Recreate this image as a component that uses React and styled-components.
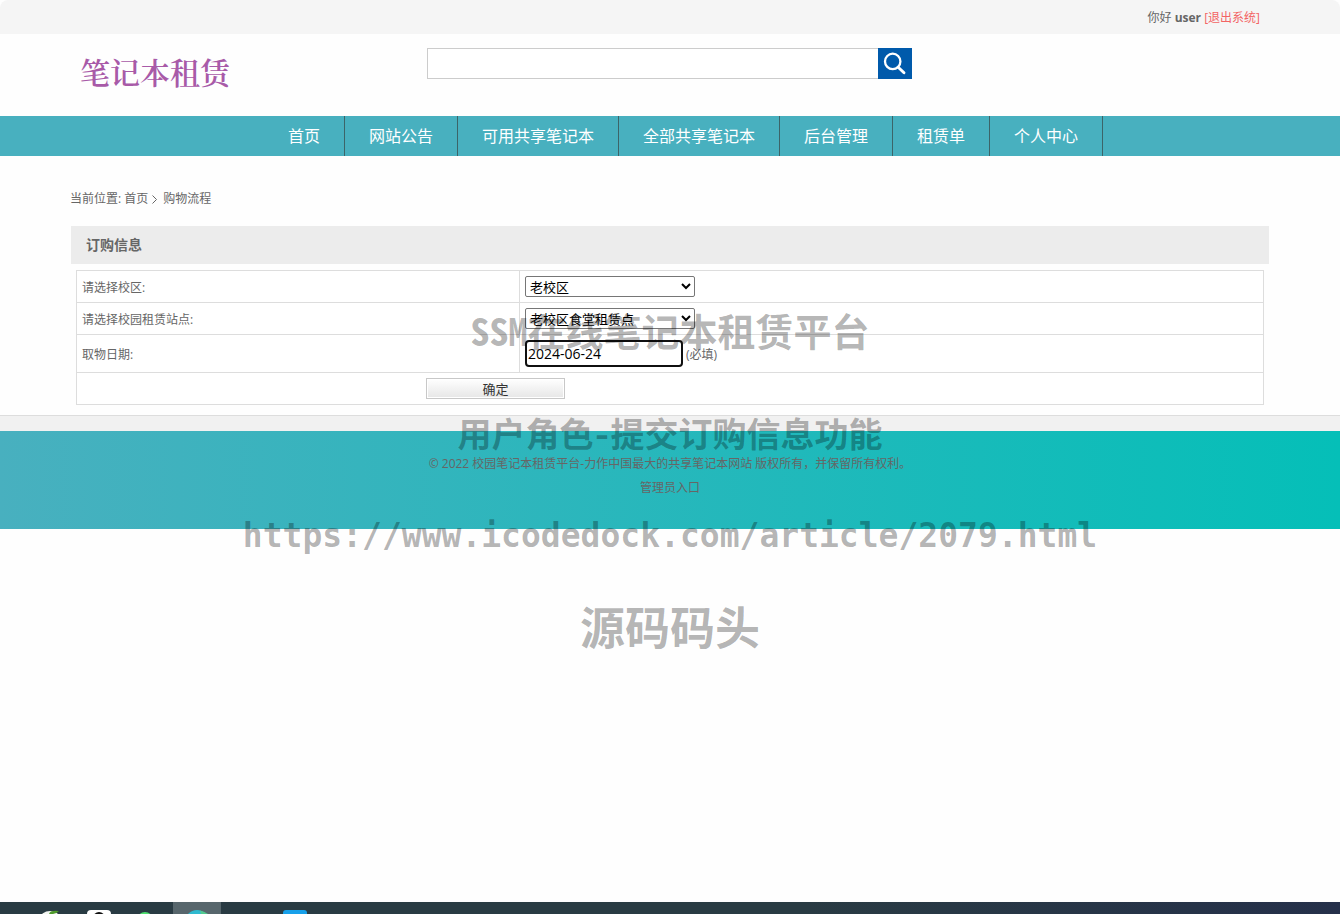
import React, { useState } from "react";
import styled, { createGlobalStyle } from "styled-components";

const MENU = [
  "首页",
  "网站公告",
  "可用共享笔记本",
  "全部共享笔记本",
  "后台管理",
  "租赁单",
  "个人中心",
];

const MARKS = [
  { text: "SSM在线笔记本租赁平台", size: 38, height: 104 },
  { text: "用户角色-提交订购信息功能", size: 34, height: 102 },
  { text: "https://www.icodedock.com/article/2079.html", size: 33, height: 104, latin: true },
  { text: "源码码头", size: 45, height: 76 },
];

const SearchIcon = () => (
  <svg width="34" height="31" viewBox="0 0 34 31" fill="none" stroke="#fff">
    <circle cx="14.7" cy="13.4" r="7.7" strokeWidth="2.3" />
    <path d="M20.2 19.2 L26 24.8" strokeWidth="2.9" strokeLinecap="round" />
  </svg>
);

const TaskIcons = () => (
  <svg width="340" height="12" viewBox="0 0 340 12">
    <ellipse cx="50" cy="17" rx="10" ry="8" fill="#f4f6f2" />
    <path d="M49 12 Q50 8 59 9 Q56 12 53 12 Z" fill="#4f9a2c" />
    <rect x="87" y="8" width="24" height="20" rx="4" fill="#fff" />
    <circle cx="99" cy="16" r="6" fill="#111" />
    <circle cx="145" cy="18" r="8" fill="#4fe070" />
    <rect x="173" y="0" width="48" height="12" fill="#57666c" />
    <circle cx="197" cy="20" r="12" fill="#2fb9cf" />
    <path d="M200 8.4 Q205 9.4 208 12 H201 Z" fill="#52c98e" />
    <rect x="283" y="8" width="24" height="20" rx="3" fill="#17a0ea" />
  </svg>
);

export default () => {
  const [keyword, setKeyword] = useState("");
  const [date, setDate] = useState("2024-06-24");

  return (
    <Page>
      <GlobalStyle />
      <TopBar>
        <Greeting>
          你好 <b>user</b> <Logout href="#">[退出系统]</Logout>
        </Greeting>
      </TopBar>

      <Header>
        <Logo href="#">笔记本租赁</Logo>
        <Search onSubmit={(e) => e.preventDefault()}>
          <SearchInput
            type="text"
            aria-label="搜索"
            value={keyword}
            onChange={(e) => setKeyword(e.target.value)}
          />
          <SearchButton type="submit" aria-label="搜索">
            <SearchIcon />
          </SearchButton>
        </Search>
      </Header>

      <Nav>
        <Menu>
          {MENU.map((name) => (
            <MenuLink href="#" key={name}>{name}</MenuLink>
          ))}
        </Menu>
      </Nav>

      <Main>
        <Crumbs>
          当前位置: <a href="#">首页</a>
          <Arrow width="5" height="9" viewBox="0 0 5 9">
            <path d="M0.5 0.5 L4.5 4.5 L0.5 8.5" fill="none" stroke="#666" />
          </Arrow>
          购物流程
        </Crumbs>
        <Title>订购信息</Title>
        <Form onSubmit={(e) => e.preventDefault()}>
          <Table>
            <tbody>
              <Row>
                <LabelCell><label htmlFor="campus">请选择校区:</label></LabelCell>
                <Cell>
                  <Select id="campus">
                    <option>老校区</option>
                  </Select>
                </Cell>
              </Row>
              <Row>
                <LabelCell><label htmlFor="site">请选择校园租赁站点:</label></LabelCell>
                <Cell>
                  <Select id="site">
                    <option>老校区食堂租赁点</option>
                  </Select>
                </Cell>
              </Row>
              <Row $tall>
                <LabelCell><label htmlFor="date">取物日期:</label></LabelCell>
                <Cell>
                  <DateField>
                    <DateInput
                      id="date"
                      type="text"
                      value={date}
                      onChange={(e) => setDate(e.target.value)}
                    />
                    (必填)
                  </DateField>
                </Cell>
              </Row>
              <Row>
                <SubmitCell colSpan={2}>
                  <Submit type="submit">确定</Submit>
                </SubmitCell>
              </Row>
            </tbody>
          </Table>
        </Form>
      </Main>

      <Divider />
      <Footer>
        <p>© 2022 校园笔记本租赁平台-力作中国最大的共享笔记本网站 版权所有，并保留所有权利。</p>
        <p><a href="#">管理员入口</a></p>
      </Footer>

      <Taskbar>
        <TaskIcons />
      </Taskbar>

      <Watermark>
        {MARKS.map((m) => (
          <Mark key={m.text} $size={m.size} $height={m.height} $latin={m.latin}>
            {m.text}
          </Mark>
        ))}
      </Watermark>
    </Page>
  );
};

const GlobalStyle = createGlobalStyle`
  * {
    box-sizing: border-box;
  }
  body {
    margin: 0;
    background: #fefefe;
    color: #666;
    font: 12px/24px "Open Sans", "Noto Sans CJK SC", sans-serif;
  }
  p {
    margin: 0;
  }
  a {
    color: inherit;
    text-decoration: none;
  }
`;

const Page = styled.div`
  position: relative;
  display: flex;
  flex-direction: column;
  min-height: 100vh;
  overflow: hidden;
`;

const TopBar = styled.div`
  height: 34px;
  background: #f5f5f5;
  border-radius: 8px 8px 0 0;
`;

const Greeting = styled.div`
  max-width: 1200px;
  margin: 0 auto;
  padding: 0 10px;
  line-height: 36px;
  text-align: right;
`;

const Logout = styled.a`
  color: #f36464;
`;

const Header = styled.header`
  display: grid;
  grid-template-columns: 1fr 485px 1fr;
  width: 100%;
  max-width: 1200px;
  height: 82px;
  margin: 0 auto;
  padding: 14px 11px 0 10px;
`;

const Logo = styled.a`
  color: #a85aa8;
  font: 600 30px/46px "Noto Serif CJK SC", "Noto Sans CJK SC", serif;
`;

const Search = styled.form`
  display: flex;
  height: 31px;
`;

const SearchInput = styled.input`
  flex: 1;
  min-width: 0;
  padding: 0 8px;
  border: 1px solid #ccc;
  border-right: 0;
  outline: none;
  background: #fff;
`;

const SearchButton = styled.button`
  display: flex;
  width: 34px;
  padding: 0;
  border: 0;
  background: #005aab;
  cursor: pointer;
`;

const Nav = styled.nav`
  background: #48b0bf;
`;

const Menu = styled.div`
  display: flex;
  max-width: 1200px;
  margin: 0 auto;
  padding-left: 194px;
`;

const MenuLink = styled.a`
  padding: 0 24px;
  border-right: 1px solid #3c6468;
  color: #fff;
  font-size: 16px;
  line-height: 40px;
`;

const Main = styled.main`
  width: 100%;
  max-width: 1200px;
  margin: 0 auto;
  padding: 31px 0 10px;
`;

const Crumbs = styled.div`
  display: flex;
  align-items: center;
  white-space: pre;
`;

const Arrow = styled.svg`
  margin: 0 6px 0 4px;
`;

const Title = styled.h2`
  margin: 15px 1px 0;
  padding-left: 15px;
  background: #ececec;
  font-size: 14px;
  line-height: 38px;
`;

const Form = styled.form`
  padding: 6px 6px 0;
`;

const Table = styled.table`
  width: 100%;
  border-collapse: collapse;
  table-layout: fixed;
  background: #fff;
`;

const Row = styled.tr`
  height: ${(p) => (p.$tall ? 38 : 32)}px;
`;

const Cell = styled.td`
  padding: 0 5px;
  border: 1px solid #ddd;
  line-height: 20px;
`;

const LabelCell = styled(Cell)`
  width: 443px;
  padding-top: 2px;
`;

const SubmitCell = styled(Cell)`
  padding-left: 349px;
`;

const Select = styled.select`
  display: block;
  width: 170px;
  height: 21px;
  padding: 0;
  border: 1px solid #767676;
  border-radius: 2px;
  background: #fff;
  color: #000;
  font: 13px "Open Sans", "Noto Sans CJK SC", sans-serif;
`;

const DateField = styled.div`
  display: flex;
  gap: 3px;
  line-height: 29px;
  height: 27px;
`;

const DateInput = styled.input`
  width: 158px;
  height: 27px;
  padding: 0 1px;
  border: 2px solid #101010;
  border-radius: 4px;
  outline: none;
  background: #fff;
  color: #000;
  font: 14px "Open Sans", "Noto Sans CJK SC", sans-serif;
`;

const Submit = styled.button`
  display: block;
  width: 139px;
  height: 21px;
  padding: 0;
  border: 1px solid #c8c8c8;
  background: linear-gradient(#fff, #e6e6e6);
  box-shadow: inset 0 0 0 1px #fff;
  color: #333;
  font: 13px "Noto Sans CJK SC", sans-serif;
`;

const Divider = styled.div`
  height: 16px;
  border-top: 1px solid #ddd;
  background: #f1f1f1;
`;

const Footer = styled.footer`
  height: 98px;
  padding-top: 21px;
  background: linear-gradient(90deg, #48b0bf, #05bfb8);
  text-align: center;
`;

const Taskbar = styled.div`
  display: flex;
  height: 12px;
  margin-top: auto;
  overflow: hidden;
  background: linear-gradient(90deg, #293b43, #293b43 60%, #25304a);
`;

// printed across the whole page, lets clicks through
const Watermark = styled.div`
  position: absolute;
  top: 278px;
  left: 0;
  right: 0;
  color: rgba(0, 0, 0, 0.3);
  font-family: "Noto Sans Mono CJK SC", "Noto Sans CJK SC", monospace;
  font-weight: bold;
  text-align: center;
  white-space: nowrap;
  pointer-events: none;
`;

const Mark = styled.div`
  font-size: ${(p) => p.$size}px;
  line-height: ${(p) => p.$height}px;
  ${(p) => p.$latin && `font-family: "DejaVu Sans Mono", monospace;`}
`;
